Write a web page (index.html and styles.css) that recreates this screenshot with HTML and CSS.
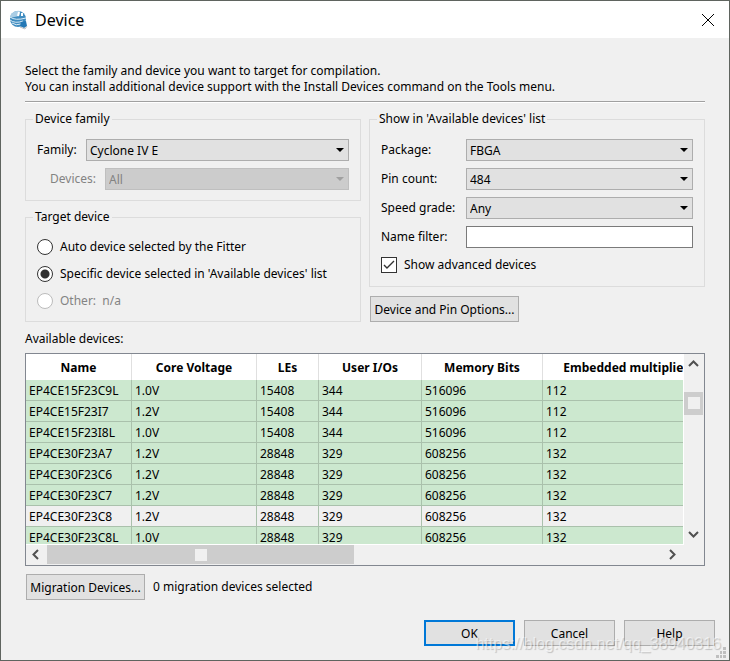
FILE: index.html
```html
<!DOCTYPE html>
<html lang="en">
<head>
    <meta charset="UTF-8">
    <meta name="viewport" content="width=device-width, initial-scale=1.0">
    <title>Device</title>
    <link rel="stylesheet" href="styles.css">
</head>
<body>
    <div class="window">
        <header class="title-bar">
            <svg class="logo" width="20" height="20" viewBox="0 0 20 20">
                <circle cx="9" cy="9" r="8" fill="#3f8cc0"/>
                <path d="M2 4 Q6 0 11 1 L10 6 Q5 7 1 8 Z" fill="#a9cde5"/>
                <path d="M1 7 Q6 11 17 8 M1 10 Q6 14 14 11 M3 13 Q7 16 12 14" fill="none" stroke="#d9ebf6"/>
                <path d="M10 2 L9 6 M13 3 L13 6" fill="none" stroke="#fff" stroke-width="2"/>
                <path d="M12 12 L17 11 L18 16 L15 18 L11 16 Z" fill="#2478b5"/>
                <path d="M11 17 L16 19 L18 16" fill="none" stroke="#b9bec2"/>
            </svg>
            <h1>Device</h1>
            <button class="close" aria-label="Close">
                <svg width="14" height="14" viewBox="0 0 14 14"><path d="M1 1 L13 13 M13 1 L1 13" stroke="#000" fill="none"/></svg>
            </button>
        </header>

        <main class="content">
            <p class="intro">Select the family and device you want to target for compilation.<br>You can install additional device support with the Install Devices command on the Tools menu.</p>
            <hr>

            <div class="columns">
                <div class="column">
                    <fieldset class="family">
                        <legend>Device family</legend>
                        <div class="row">
                            <label for="family">Family:</label>
                            <span class="select"><select id="family"><option>Cyclone IV E</option></select></span>
                        </div>
                        <div class="row sub disabled">
                            <label for="devices">Devices:</label>
                            <span class="select"><select id="devices" disabled><option>All</option></select></span>
                        </div>
                    </fieldset>

                    <fieldset class="target">
                        <legend>Target device</legend>
                        <label class="choice"><input type="radio" name="target">Auto device selected by the Fitter</label>
                        <label class="choice"><input type="radio" name="target" checked>Specific device selected in 'Available devices' list</label>
                        <label class="choice disabled"><input type="radio" name="target" disabled>Other:&nbsp; n/a</label>
                    </fieldset>
                </div>

                <div class="column">
                    <fieldset class="filters">
                        <legend>Show in 'Available devices' list</legend>
                        <div class="row">
                            <label for="package">Package:</label>
                            <span class="select"><select id="package"><option>FBGA</option></select></span>
                        </div>
                        <div class="row">
                            <label for="pins">Pin count:</label>
                            <span class="select"><select id="pins"><option>484</option></select></span>
                        </div>
                        <div class="row">
                            <label for="speed">Speed grade:</label>
                            <span class="select"><select id="speed"><option>Any</option></select></span>
                        </div>
                        <div class="row">
                            <label for="filter">Name filter:</label>
                            <input type="text" id="filter">
                        </div>
                        <label class="choice check">
                            <input type="checkbox" checked>
                            <svg width="16" height="16" viewBox="0 0 16 16"><path d="M3 8 L6 11 L13 4" fill="none" stroke="#333" stroke-width="1.4"/></svg>
                            Show advanced devices
                        </label>
                    </fieldset>
                    <button class="btn options">Device and Pin Options...</button>
                </div>
            </div>

            <p class="list-label">Available devices:</p>
            <div class="list">
                <div class="viewport">
                    <table>
                        <colgroup>
                            <col class="c-name"><col class="c-volt"><col class="c-les"><col class="c-io"><col class="c-mem"><col class="c-mult">
                        </colgroup>
                        <thead>
                            <tr><th>Name</th><th>Core Voltage</th><th>LEs</th><th>User I/Os</th><th>Memory Bits</th><th>Embedded multiplier</th></tr>
                        </thead>
                        <tbody>
                            <tr><td>EP4CE15F23C9L</td><td>1.0V</td><td>15408</td><td>344</td><td>516096</td><td>112</td></tr>
                            <tr><td>EP4CE15F23I7</td><td>1.2V</td><td>15408</td><td>344</td><td>516096</td><td>112</td></tr>
                            <tr><td>EP4CE15F23I8L</td><td>1.0V</td><td>15408</td><td>344</td><td>516096</td><td>112</td></tr>
                            <tr><td>EP4CE30F23A7</td><td>1.2V</td><td>28848</td><td>329</td><td>608256</td><td>132</td></tr>
                            <tr><td>EP4CE30F23C6</td><td>1.2V</td><td>28848</td><td>329</td><td>608256</td><td>132</td></tr>
                            <tr><td>EP4CE30F23C7</td><td>1.2V</td><td>28848</td><td>329</td><td>608256</td><td>132</td></tr>
                            <tr class="selected"><td>EP4CE30F23C8</td><td>1.2V</td><td>28848</td><td>329</td><td>608256</td><td>132</td></tr>
                            <tr><td>EP4CE30F23C8L</td><td>1.0V</td><td>28848</td><td>329</td><td>608256</td><td>132</td></tr>
                        </tbody>
                    </table>
                </div>
                <div class="scroll-v">
                    <svg width="11" height="8" viewBox="0 0 11 8"><path d="M1 6 L5.5 1.5 L10 6"/></svg>
                    <div class="thumb"></div>
                    <svg width="11" height="8" viewBox="0 0 11 8"><path d="M1 2 L5.5 6.5 L10 2"/></svg>
                </div>
                <div class="scroll-h">
                    <svg width="8" height="11" viewBox="0 0 8 11"><path d="M6 1 L1.5 5.5 L6 10"/></svg>
                    <div class="track"><div class="thumb"></div></div>
                    <svg width="8" height="11" viewBox="0 0 8 11"><path d="M2 1 L6.5 5.5 L2 10"/></svg>
                </div>
            </div>

            <div class="migration">
                <button class="btn">Migration Devices...</button>
                <span>0 migration devices selected</span>
            </div>
        </main>

        <footer class="actions">
            <button class="btn default">OK</button>
            <button class="btn">Cancel</button>
            <button class="btn">Help</button>
        </footer>

        <span class="watermark">https://blog.csdn.net/qq_38940316</span>
        <svg class="grip" width="10" height="11" viewBox="0 0 10 11" fill="#bfbfbf">
            <path d="M7 0h3v3h-3z M4 4h2v3h-2z M7 4h3v3h-3z M0 8h3v3h-3z M4 8h2v3h-2z M7 8h3v3h-3z"/>
        </svg>
    </div>
</body>
</html>
```
FILE: styles.css
```css
* {
    margin: 0;
    padding: 0;
    box-sizing: border-box;
}

body, button, input, select {
    font-family: Tahoma, "Noto Sans", sans-serif;
    font-size: 12px;
    line-height: 16px;
    color: #000;
}

.window {
    position: relative;
    display: flex;
    flex-direction: column;
    height: 100vh;
    background: #f0f0f0;
    border: 1px solid #5f645f;
    overflow: hidden;
}

.title-bar {
    display: flex;
    align-items: center;
    gap: 6px;
    height: 37px;
    padding: 0 14px 0 8px;
    background: #fff;
}

.title-bar h1 {
    flex: 1;
    font-family: "Segoe UI", "Noto Sans", sans-serif;
    font-size: 16px;
    font-weight: 400;
}

.close {
    display: flex;
    border: none;
    background: none;
}

.content {
    flex: 1;
    display: flex;
    flex-direction: column;
    min-height: 0;
    padding: 25px 24px 0;
}

hr {
    margin: 6px 0 8px;
    border: none;
    border-top: 1px solid #a0a0a0;
    border-bottom: 1px solid #fff;
}

.columns {
    display: grid;
    grid-template-columns: 1fr 1fr;
    gap: 8px;
}

.column {
    display: flex;
    flex-direction: column;
    gap: 8px;
    min-width: 0;
}

fieldset {
    display: flex;
    flex-direction: column;
    gap: 7px;
    min-width: 0;
    padding: 12px 11px 10px;
    border: 1px solid #dcdcdc;
}

legend {
    margin-left: -4px;
    padding: 0 2px;
}

.target {
    gap: 11px;
    padding: 14px 11px 12px;
}

.row {
    display: flex;
    align-items: center;
    gap: 7px;
}

.row.sub {
    padding-left: 13px;
}

.family label {
    min-width: 42px;
}

.family .sub label {
    min-width: 48px;
}

.filters {
    padding-bottom: 11px;
}

.filters label {
    width: 78px;
}

.select {
    position: relative;
    flex: 1;
    display: flex;
}

.select::after {
    content: "";
    position: absolute;
    top: 9px;
    right: 5px;
    border: 4px solid transparent;
    border-top-color: #000;
    border-bottom: none;
    pointer-events: none;
}

select, input[type="text"] {
    flex: 1;
    min-width: 0;
    height: 22px;
    padding: 1px 3px 0;
    border: 1px solid #adadad;
    border-radius: 0;
    background: #e1e1e1;
    appearance: none;
}

input[type="text"] {
    border-color: #7a7a7a;
    background: #fff;
}

.disabled, .disabled select {
    color: #838383;
}

.disabled select {
    background: #ccc;
    border-color: #bfbfbf;
    opacity: 1;
}

.disabled .select::after {
    border-top-color: #a0a0a0;
}

.choice {
    display: flex;
    align-items: center;
    gap: 7px;
}

.filters .check {
    position: relative;
    width: auto;
    height: 20px;
}

.check svg {
    position: absolute;
    left: 0;
    top: 2px;
}

input[type="radio"], input[type="checkbox"] {
    width: 16px;
    height: 16px;
    border: 1px solid #333;
    background: #fff;
    appearance: none;
}

input[type="radio"] {
    border-radius: 50%;
}

input[type="radio"]:checked {
    background: radial-gradient(circle, #333 4px, #fff 5px);
}

input[type="radio"]:disabled {
    border-color: #bcbcbc;
}

.btn {
    height: 26px;
    padding: 1px 2px 0;
    border: 1px solid #adadad;
    background: #e1e1e1;
    white-space: nowrap;
}

.options {
    align-self: flex-start;
    min-width: 149px;
    margin: 1px 0 0 1px;
}

.list-label {
    margin: 9px 0 6px;
}

.list {
    flex: 1;
    display: grid;
    grid-template: 1fr 20px / 1fr 20px;
    min-height: 0;
    border: 1px solid #828790;
}

.viewport {
    min-width: 0;
    overflow: hidden;
    border-right: 1px solid #fff;
    border-bottom: 1px solid #fff;
}

table {
    width: 684px;
    table-layout: fixed;
    border-collapse: separate;
    border-spacing: 0;
}

.c-name { width: 106px; }
.c-volt { width: 125px; }
.c-les { width: 62px; }
.c-io { width: 103px; }
.c-mem { width: 121px; }

th {
    height: 26px;
    padding-top: 2px;
    background: #fff;
    border-right: 1px solid #e0e0e0;
    font-weight: bold;
    white-space: nowrap;
}

td {
    height: 21px;
    padding: 2px 3px 0;
    background: #cce8cf;
    border-right: 1px solid #aac1ac;
    border-bottom: 1px solid #aac1ac;
}

.selected td {
    background: #f0f0f0;
}

.list svg {
    fill: none;
    stroke: #505050;
    stroke-width: 2;
}

.scroll-v {
    display: flex;
    flex-direction: column;
    align-items: center;
    padding: 6px 2px 7px 0;
}

.thumb {
    background: #cdcdcd;
}

.thumb::after {
    content: "";
    display: block;
    width: 12px;
    height: 12px;
    background: #f0f0f0;
}

.scroll-v .thumb {
    margin: 24px 0 auto;
    padding: 5px 3px 6px 4px;
}

.scroll-h {
    display: flex;
    align-items: center;
    gap: 7px;
    padding: 0 8px 1px 6px;
}

.track {
    flex: 1;
}

.scroll-h .thumb {
    display: flex;
    align-items: center;
    justify-content: center;
    width: 50%;
    height: 19px;
}

.migration {
    display: flex;
    align-items: center;
    gap: 8px;
    margin: 8px 0 0 1px;
}

.migration .btn {
    min-width: 119px;
}

.actions {
    display: flex;
    justify-content: flex-end;
    gap: 9px;
    padding: 20px 14px 14px;
}

.actions .btn {
    width: 91px;
}

.actions .default {
    border: 2px solid #0078d7;
}

.watermark {
    position: absolute;
    right: 8px;
    bottom: 8px;
    font-family: "Liberation Sans", Arial, sans-serif;
    font-size: 16px;
    color: rgba(255, 255, 255, 0.55);
    text-shadow: 1px 1px 1px rgba(0, 0, 0, 0.2);
    pointer-events: none;
}

.grip {
    position: absolute;
    right: 3px;
    bottom: 2px;
}
```
